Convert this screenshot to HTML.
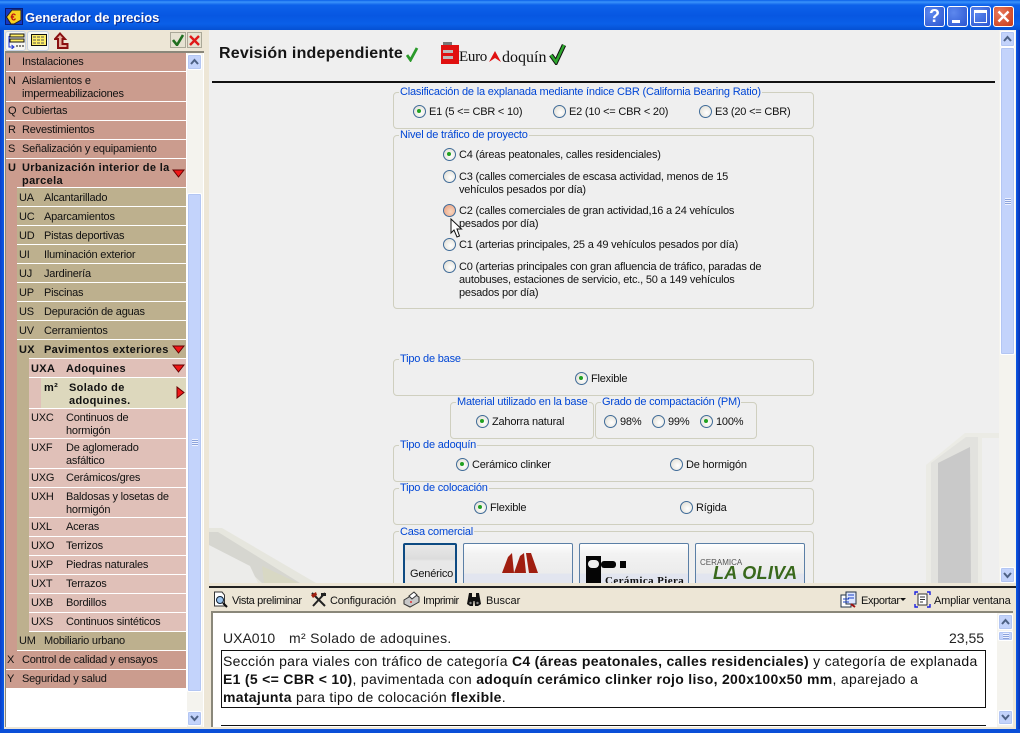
<!DOCTYPE html>
<html><head><meta charset="utf-8">
<style>
html,body{margin:0;padding:0;width:1020px;height:733px;overflow:hidden;background:#efefef}
*{box-sizing:border-box}
body{font-family:"Liberation Sans",sans-serif;font-size:11px;color:#111;position:relative;letter-spacing:-.2px}
div,span,svg{position:absolute}
.t{white-space:nowrap;line-height:13px;margin-top:1px}
.b{font-weight:bold;letter-spacing:.35px}
.r{left:6px;width:180px;background:#cb9c8e;}
.r2{left:17px;width:169px;background:#bdb08e;}
.r3{left:29px;width:157px;background:#e0c0b8;}
.g{position:absolute;border:1px solid #cfcfbf;border-radius:4px}
.l{position:absolute;background:#efefef;color:#0046d5;white-space:nowrap;line-height:13px;padding:0 1px;height:13px;margin-top:1px}
.o{width:13px;height:13px;border-radius:50%;border:1.5px solid #3f6b98;background:radial-gradient(circle at 60% 60%,#fff,#dcd9ce)}
.o.on::after{content:"";position:absolute;left:3px;top:3px;width:4px;height:4px;border-radius:50%;background:#21a121}
.btn{background:#c3d3fb;border:1px solid #fff;border-radius:2px;box-shadow:0 0 0 1px #b3c6f3 inset}
.tbtn{top:6px;width:21px;height:21px;border:1px solid #fff;border-radius:3px;background:radial-gradient(circle at 30% 30%,#5d88ee,#2a55d0)}
.bn{border:1px solid #5b7fa6;border-radius:2px;height:60px;top:543px;background:linear-gradient(#fff 0,#f2f2f2 10px,#ececec 29px,#e2e5ef 30px)}
.d{font-size:14px;letter-spacing:.3px;margin-top:0;color:#111}
</style></head><body>

<!-- window chrome -->
<div style="left:0;top:0;width:1020px;height:733px;background:#0753e0"></div>
<div style="left:0;top:0;width:1020px;height:30px;background:linear-gradient(#0a5fe8 0,#3a93fb 2px,#0d62ea 5px,#0757e2 16px,#0a5fe8 24px,#0550d2 30px)"></div>
<div style="left:0;top:30px;width:4px;height:703px;background:linear-gradient(90deg,#0a3fc8,#0a5ae8)"></div>
<div style="left:1016px;top:30px;width:4px;height:703px;background:linear-gradient(90deg,#0a5ae8,#0a30b0)"></div>
<div style="left:0;top:729px;width:1020px;height:4px;background:#0a4fd8"></div>

<svg style="left:5px;top:8px" width="18" height="17" viewBox="0 0 18 17"><rect width="17" height="16" x=".5" y=".5" fill="#1238c8" stroke="#0a1a70"/><path d="M1.500 9L7 2H16V12L9 16H6Z" fill="#f8d020" stroke="#222"/><text x="5.500" y="12.500" font-size="10" font-weight="bold" fill="#c01010" font-family="Liberation Sans">€</text></svg>
<div class="t" style="left:25px;top:10px;color:#fff;font-weight:bold;font-size:13px;letter-spacing:0;text-shadow:1px 1px 0 #0a2a90">Generador de precios</div>

<div class="tbtn" style="left:924px"><span style="left:4px;top:-1px;color:#fff;font-weight:bold;font-size:18px;line-height:20px;letter-spacing:0">?</span></div>
<div class="tbtn" style="left:947px"><div style="left:4px;top:13px;width:8px;height:3px;background:#fff"></div></div>
<div class="tbtn" style="left:970px"><div style="left:3px;top:3px;width:13px;height:13px;border:1px solid #fff;border-top:3px solid #fff"></div></div>
<div class="tbtn" style="left:993px;background:radial-gradient(circle at 30% 30%,#e8785a,#c83a18)"><svg style="left:3px;top:3px" width="13" height="13"><path d="M1.500 1.500L11.500 11.500M11.500 1.500L1.500 11.500" stroke="#fff" stroke-width="2.400"/></svg></div>

<!-- left panel -->
<div style="left:4px;top:30px;width:205px;height:699px;background:#ede6d6"></div>
<div style="left:5px;top:51px;width:199px;height:676px;background:#fff;border-top:2px solid #8a877a;border-left:1px solid #8a877a"></div>

<!-- toolbar left -->
<div style="left:5px;top:31px;width:21px;height:20px;background:#f7f7f2;border:1px solid #c6d2e2;border-radius:3px"></div>
<div style="left:27px;top:31px;width:22px;height:20px;background:#f7f7f2;border:1px solid #c6d2e2;border-radius:3px"></div>
<svg style="left:7px;top:33px" width="18" height="16"><rect x="3" y="1" width="14" height="3" fill="#ffee66" stroke="#111"/><rect x="3" y="6" width="14" height="3" fill="#ffee66" stroke="#111"/><path d="M2 3V14H6M4.500 12L7 14L4.500 16" stroke="#1a30d0" fill="none"/><path d="M9 13H17" stroke="#111" stroke-dasharray="2 1"/></svg>
<svg style="left:31px;top:34px" width="16" height="13"><rect x=".5" y=".5" width="15" height="11" fill="#ffee66" stroke="#111"/><path d="M2 3H14M2 6H14M2 9H14" stroke="#555" stroke-dasharray="3 1"/></svg>
<svg style="left:54px;top:32px" width="15" height="17"><path d="M6 1.500L11 7H8.500V12H13.500V16H4V7H1Z" fill="#e8b0a0" stroke="#8a1010" stroke-width="2"/></svg>
<div style="left:170px;top:32px;width:16px;height:16px;background:#e6e2d2;border:1px solid #aaa898"></div>
<svg style="left:172px;top:34px" width="13" height="12"><path d="M1 6L5 11L11 1" stroke="#1f6e1f" stroke-width="2.600" fill="none"/></svg>
<div style="left:187px;top:32px;width:15px;height:16px;background:#e6e2d2;border:1px solid #aaa898"></div>
<svg style="left:189px;top:35px" width="12" height="11"><path d="M1 1L10 10M10 1L1 10" stroke="#e01818" stroke-width="2.400"/></svg>

<!-- list -->
<div class="r" style="top:53px;height:18px"></div><span class="t" style="left:8px;top:55px">I</span><span class="t" style="left:22px;top:55px">Instalaciones</span>
<div class="r" style="top:72px;height:29px"></div><span class="t" style="left:8px;top:74px">N</span><span class="t" style="left:22px;top:74px">Aislamientos e</span><span class="t" style="left:22px;top:87px">impermeabilizaciones</span>
<div class="r" style="top:102px;height:18px"></div><span class="t" style="left:8px;top:104px">Q</span><span class="t" style="left:22px;top:104px">Cubiertas</span>
<div class="r" style="top:121px;height:18px"></div><span class="t" style="left:8px;top:123px">R</span><span class="t" style="left:22px;top:123px">Revestimientos</span>
<div class="r" style="top:140px;height:18px"></div><span class="t" style="left:8px;top:142px">S</span><span class="t" style="left:22px;top:142px">Señalización y equipamiento</span>
<div class="r" style="top:159px;height:28px"></div><span class="t b" style="left:8px;top:161px">U</span><span class="t b" style="left:22px;top:161px">Urbanización interior de la</span><span class="t b" style="left:22px;top:174px">parcela</span>
<div class="r" style="top:187px;height:464px;width:11px"></div>

<div class="r2" style="top:188px;height:18px"></div><span class="t" style="left:19px;top:191px">UA</span><span class="t" style="left:44px;top:191px">Alcantarillado</span>
<div class="r2" style="top:207px;height:18px"></div><span class="t" style="left:19px;top:210px">UC</span><span class="t" style="left:44px;top:210px">Aparcamientos</span>
<div class="r2" style="top:226px;height:18px"></div><span class="t" style="left:19px;top:229px">UD</span><span class="t" style="left:44px;top:229px">Pistas deportivas</span>
<div class="r2" style="top:245px;height:18px"></div><span class="t" style="left:19px;top:248px">UI</span><span class="t" style="left:44px;top:248px">Iluminación exterior</span>
<div class="r2" style="top:264px;height:18px"></div><span class="t" style="left:19px;top:267px">UJ</span><span class="t" style="left:44px;top:267px">Jardinería</span>
<div class="r2" style="top:283px;height:18px"></div><span class="t" style="left:19px;top:286px">UP</span><span class="t" style="left:44px;top:286px">Piscinas</span>
<div class="r2" style="top:302px;height:18px"></div><span class="t" style="left:19px;top:305px">US</span><span class="t" style="left:44px;top:305px">Depuración de aguas</span>
<div class="r2" style="top:321px;height:18px"></div><span class="t" style="left:19px;top:324px">UV</span><span class="t" style="left:44px;top:324px">Cerramientos</span>
<div class="r2" style="top:340px;height:18px"></div><span class="t b" style="left:19px;top:343px">UX</span><span class="t b" style="left:44px;top:343px">Pavimentos exteriores</span>
<div class="r2" style="top:358px;height:274px;width:12px"></div>
<div class="r2" style="top:632px;height:18px"></div><span class="t" style="left:19px;top:634px">UM</span><span class="t" style="left:44px;top:634px">Mobiliario urbano</span>

<div class="r3" style="top:359px;height:18px"></div><span class="t b" style="left:31px;top:362px">UXA</span><span class="t b" style="left:66px;top:362px">Adoquines</span>
<div class="r3" style="top:378px;height:30px;width:12px"></div>
<div style="left:41px;top:378px;width:145px;height:30px;background:#ddd8bd"></div><span class="t b" style="left:44px;top:381px">m²</span><span class="t b" style="left:69px;top:381px">Solado de</span><span class="t b" style="left:69px;top:394px">adoquines.</span>
<div class="r3" style="top:409px;height:29px"></div><span class="t" style="left:31px;top:411px">UXC</span><span class="t" style="left:66px;top:411px">Continuos de</span><span class="t" style="left:66px;top:424px">hormigón</span>
<div class="r3" style="top:439px;height:29px"></div><span class="t" style="left:31px;top:441px">UXF</span><span class="t" style="left:66px;top:441px">De aglomerado</span><span class="t" style="left:66px;top:454px">asfáltico</span>
<div class="r3" style="top:469px;height:18px"></div><span class="t" style="left:31px;top:471px">UXG</span><span class="t" style="left:66px;top:471px">Cerámicos/gres</span>
<div class="r3" style="top:488px;height:29px"></div><span class="t" style="left:31px;top:490px">UXH</span><span class="t" style="left:66px;top:490px">Baldosas y losetas de</span><span class="t" style="left:66px;top:503px">hormigón</span>
<div class="r3" style="top:518px;height:18px"></div><span class="t" style="left:31px;top:520px">UXL</span><span class="t" style="left:66px;top:520px">Aceras</span>
<div class="r3" style="top:537px;height:18px"></div><span class="t" style="left:31px;top:539px">UXO</span><span class="t" style="left:66px;top:539px">Terrizos</span>
<div class="r3" style="top:556px;height:18px"></div><span class="t" style="left:31px;top:558px">UXP</span><span class="t" style="left:66px;top:558px">Piedras naturales</span>
<div class="r3" style="top:575px;height:18px"></div><span class="t" style="left:31px;top:577px">UXT</span><span class="t" style="left:66px;top:577px">Terrazos</span>
<div class="r3" style="top:594px;height:18px"></div><span class="t" style="left:31px;top:596px">UXB</span><span class="t" style="left:66px;top:596px">Bordillos</span>
<div class="r3" style="top:613px;height:18px"></div><span class="t" style="left:31px;top:615px">UXS</span><span class="t" style="left:66px;top:615px">Continuos sintéticos</span>

<div class="r" style="top:651px;height:18px"></div><span class="t" style="left:7px;top:653px">X</span><span class="t" style="left:22px;top:653px">Control de calidad y ensayos</span>
<div class="r" style="top:670px;height:18px"></div><span class="t" style="left:7px;top:672px">Y</span><span class="t" style="left:22px;top:672px">Seguridad y salud</span>

<svg style="left:172px;top:169px" width="13" height="9"><path d="M1 1H12L6.500 8Z" fill="#f01818" stroke="#600" stroke-width="1"/></svg>
<svg style="left:172px;top:345px" width="13" height="9"><path d="M1 1H12L6.500 8Z" fill="#f01818" stroke="#600" stroke-width="1"/></svg>
<svg style="left:172px;top:364px" width="13" height="9"><path d="M1 1H12L6.500 8Z" fill="#f01818" stroke="#600" stroke-width="1"/></svg>
<svg style="left:176px;top:386px" width="9" height="13"><path d="M1 1V12L8 6.500Z" fill="#f01818" stroke="#600" stroke-width="1"/></svg>

<!-- left scrollbar -->
<div style="left:187px;top:53px;width:16px;height:674px;background:#f4f3ee"></div>
<div class="btn" style="left:187px;top:54px;width:15px;height:16px"></div>
<svg style="left:190px;top:58px" width="9" height="7"><path d="M1 6L4.500 2L8 6" stroke="#4d6185" stroke-width="2" fill="none"/></svg>
<div class="btn" style="left:187px;top:193px;width:15px;height:499px"></div>
<div style="left:192px;top:439px;width:6px;height:7px;background:repeating-linear-gradient(#eef2ff 0,#eef2ff 1px,#8ca3db 1px,#8ca3db 2px)"></div>
<div class="btn" style="left:187px;top:711px;width:15px;height:15px"></div>
<svg style="left:190px;top:715px" width="9" height="7"><path d="M1 1L4.500 5L8 1" stroke="#4d6185" stroke-width="2" fill="none"/></svg>

<!-- splitter -->
<div style="left:205px;top:30px;width:4px;height:699px;background:#ede6d6"></div>

<!-- main -->
<div id="main" style="left:209px;top:30px;width:790px;height:553px;background:#efefef;overflow:hidden">
  <svg style="left:0;top:0" width="790" height="553" viewBox="209 30 790 553">
    <path d="M209 528H222L316 583H255L209 562Z" fill="#e6e6de"/>
    <path d="M209 532H218L300 583H262L250 572L209 556Z" fill="#d6d6d0"/>
    <path d="M209 545L250 566L258 583H209Z" fill="#ececea"/>
    <path d="M262 566L298 583H264Z" fill="#d8d8c4"/>
    <path d="M926 583V465L965 433H999V438H982V583Z" fill="#ebebe5"/>
    <path d="M931 583V463L966 437H978V583Z" fill="#e2e2de"/>
    <path d="M938 583V463L970 447L971 583Z" fill="#c9c9c9"/>
  </svg>
</div>
<div style="left:212px;top:81px;width:783px;height:2px;background:#111"></div>

<span class="t" style="left:219px;top:44px;margin-top:0;font-weight:bold;font-size:16px;line-height:19px;letter-spacing:.2px;color:#151515">Revisión independiente</span>
<svg style="left:406px;top:46px" width="13" height="16"><path d="M1 9L4.500 14L11 2" stroke="#2a9a2a" stroke-width="2.800" fill="none"/></svg>
<div style="left:441px;top:45px;width:18px;height:19px;background:#e01010"></div>
<div style="left:443px;top:42px;width:9px;height:3px;background:#777"></div>
<div style="left:443px;top:50px;width:10px;height:3px;background:#bbb"></div>
<div style="left:443px;top:56px;width:10px;height:3px;background:#bbb"></div>
<span class="t" style="left:459px;top:49px;margin-top:0;font-family:'Liberation Serif',serif;font-size:15px;line-height:17px;color:#111;letter-spacing:-.3px">Euro</span>
<svg style="left:488px;top:50px" width="14" height="13"><path d="M1 12L7 1L13 12L7 8Z" fill="#e01010"/></svg>
<span class="t" style="left:502px;top:49px;margin-top:0;font-family:'Liberation Serif',serif;font-size:16px;line-height:17px;color:#111;letter-spacing:0">doquín</span>
<svg style="left:549px;top:42px" width="18" height="23"><path d="M2 13L7 20L15 3" stroke="#111" stroke-width="4.500" fill="none"/><path d="M2 13L7 20L15 3" stroke="#2ea82e" stroke-width="2.500" fill="none"/></svg>

<!-- group 1 -->
<div class="g" style="left:393px;top:92px;width:421px;height:37px"></div>
<span class="l" style="left:399px;top:85px">Clasificación de la explanada mediante índice CBR (California Bearing Ratio)</span>
<div class="o on" style="left:413px;top:105px"></div><span class="t" style="left:429px;top:105px">E1 (5 &lt;= CBR &lt; 10)</span>
<div class="o" style="left:553px;top:105px"></div><span class="t" style="left:569px;top:105px">E2 (10 &lt;= CBR &lt; 20)</span>
<div class="o" style="left:699px;top:105px"></div><span class="t" style="left:715px;top:105px">E3 (20 &lt;= CBR)</span>

<!-- group 2 -->
<div class="g" style="left:393px;top:135px;width:421px;height:174px"></div>
<span class="l" style="left:399px;top:128px">Nivel de tráfico de proyecto</span>
<div class="o on" style="left:443px;top:148px"></div><span class="t" style="left:459px;top:148px">C4 (áreas peatonales, calles residenciales)</span>
<div class="o" style="left:443px;top:170px"></div><span class="t" style="left:459px;top:170px">C3 (calles comerciales de escasa actividad, menos de 15</span><span class="t" style="left:459px;top:183px">vehículos pesados por día)</span>
<div class="o" style="left:443px;top:204px;background:radial-gradient(circle at 60% 60%,#f8d8c0,#e89878)"></div><span class="t" style="left:459px;top:204px">C2 (calles comerciales de gran actividad,16 a 24 vehículos</span><span class="t" style="left:459px;top:217px">pesados por día)</span>
<div class="o" style="left:443px;top:238px"></div><span class="t" style="left:459px;top:238px">C1 (arterias principales, 25 a 49 vehículos pesados por día)</span>
<div class="o" style="left:443px;top:260px"></div><span class="t" style="left:459px;top:260px">C0 (arterias principales con gran afluencia de tráfico, paradas de</span><span class="t" style="left:459px;top:273px">autobuses, estaciones de servicio, etc., 50 a 149 vehículos</span><span class="t" style="left:459px;top:286px">pesados por día)</span>
<svg style="left:450px;top:218px" width="13" height="21"><path d="M1 1V15L4 12L7 19L9.500 18L7 11H11.500Z" fill="#fff" stroke="#111"/></svg>

<!-- group 3 -->
<div class="g" style="left:393px;top:359px;width:421px;height:37px"></div>
<span class="l" style="left:399px;top:352px">Tipo de base</span>
<div class="o on" style="left:575px;top:372px"></div><span class="t" style="left:591px;top:372px">Flexible</span>

<div class="g" style="left:450px;top:402px;width:144px;height:37px"></div>
<span class="l" style="left:456px;top:395px">Material utilizado en la base</span>
<div class="o on" style="left:476px;top:415px"></div><span class="t" style="left:492px;top:415px">Zahorra natural</span>

<div class="g" style="left:595px;top:402px;width:162px;height:37px"></div>
<span class="l" style="left:601px;top:395px">Grado de compactación (PM)</span>
<div class="o" style="left:604px;top:415px"></div><span class="t" style="left:620px;top:415px">98%</span>
<div class="o" style="left:652px;top:415px"></div><span class="t" style="left:668px;top:415px">99%</span>
<div class="o on" style="left:700px;top:415px"></div><span class="t" style="left:716px;top:415px">100%</span>

<div class="g" style="left:393px;top:445px;width:421px;height:37px"></div>
<span class="l" style="left:399px;top:438px">Tipo de adoquín</span>
<div class="o on" style="left:456px;top:458px"></div><span class="t" style="left:472px;top:458px">Cerámico clinker</span>
<div class="o" style="left:670px;top:458px"></div><span class="t" style="left:686px;top:458px">De hormigón</span>

<div class="g" style="left:393px;top:488px;width:421px;height:37px"></div>
<span class="l" style="left:399px;top:481px">Tipo de colocación</span>
<div class="o on" style="left:474px;top:501px"></div><span class="t" style="left:490px;top:501px">Flexible</span>
<div class="o" style="left:680px;top:501px"></div><span class="t" style="left:696px;top:501px">Rígida</span>

<div class="g" style="left:393px;top:531px;width:421px;height:80px"></div>
<span class="l" style="left:399px;top:525px">Casa comercial</span>

<div style="left:403px;top:543px;width:54px;height:60px;border:2px solid #0d4a82;border-radius:2px;background:linear-gradient(#e8e8e8 0,#dcdcdc 14px,#e8e8e8 16px)"></div>
<span class="t" style="left:410px;top:567px">Genérico</span>
<div class="bn" style="left:463px;width:110px"></div>
<svg style="left:502px;top:553px" width="37" height="21"><path d="M0 20L6 4L10 0L12 20H7ZM12 20L18 3L22 0L24 20H18ZM24 0H29L36 20H27Z" fill="#a01e10"/></svg>
<div class="bn" style="left:579px;width:110px"></div>
<div style="left:586px;top:556px;width:15px;height:40px;background:#050505"></div>
<div style="left:601px;top:561px;width:15px;height:7px;background:#050505;border-radius:3px"></div>
<div style="left:620px;top:561px;width:6px;height:7px;background:#050505"></div>
<div style="left:588px;top:560px;width:11px;height:8px;background:#eee;border-radius:4px"></div>
<span class="t" style="left:605px;top:574px;font-weight:bold;font-family:'Liberation Serif',serif;font-size:11px;letter-spacing:.4px;color:#111">Cerámica Piera</span>
<div class="bn" style="left:695px;width:110px"></div>
<span class="t" style="left:700px;top:555px;font-size:8px;letter-spacing:0;color:#555">CERAMICA</span>
<span class="t" style="left:713px;top:563px;font-weight:bold;font-size:18px;line-height:19px;font-style:italic;color:#38681c;letter-spacing:.3px">LA OLIVA</span>

<!-- right scrollbar -->
<div style="left:999px;top:30px;width:17px;height:553px;background:#f4f3ee"></div>
<div class="btn" style="left:1000px;top:31px;width:15px;height:16px"></div>
<svg style="left:1003px;top:35px" width="9" height="7"><path d="M1 6L4.500 2L8 6" stroke="#4d6185" stroke-width="2" fill="none"/></svg>
<div class="btn" style="left:1000px;top:47px;width:15px;height:308px"></div>
<div style="left:1005px;top:198px;width:6px;height:7px;background:repeating-linear-gradient(#eef2ff 0,#eef2ff 1px,#8ca3db 1px,#8ca3db 2px)"></div>
<div class="btn" style="left:1000px;top:567px;width:15px;height:16px"></div>
<svg style="left:1003px;top:572px" width="9" height="7"><path d="M1 1L4.500 5L8 1" stroke="#4d6185" stroke-width="2" fill="none"/></svg>

<!-- divider and bottom panel -->
<div style="left:209px;top:583px;width:807px;height:146px;background:#ede6d6"></div>
<div style="left:209px;top:586px;width:807px;height:2px;background:#222"></div>
<div style="left:211px;top:611px;width:802px;height:116px;background:#fff;border-top:2px solid #8a877a;border-left:2px solid #8a877a"></div>

<svg style="left:212px;top:591px" width="17" height="17"><path d="M2.500 1H10L12.500 4V15H2.500Z" fill="#fff" stroke="#333"/><circle cx="8" cy="9" r="3.500" fill="#9cc4ee" stroke="#123"/><path d="M11 12L15 16" stroke="#111" stroke-width="2"/></svg>
<span class="t" style="left:232px;top:594px;letter-spacing:-.37px">Vista preliminar</span>
<svg style="left:310px;top:591px" width="17" height="17"><path d="M2 2L15 15M15 2L3 15" stroke="#222" stroke-width="2"/><path d="M1 4L6 1L7 4L3 7Z" fill="#a02010"/><path d="M11 2H16V5H11Z" fill="#222"/></svg>
<span class="t" style="left:330px;top:594px;letter-spacing:-.15px">Configuración</span>
<svg style="left:403px;top:591px" width="17" height="17"><path d="M1 9L11 3L16 6V11L7 16L1 13Z" fill="#c8c8c8" stroke="#333"/><path d="M6 5L11 1L14 4L9 8Z" fill="#fff" stroke="#333"/><circle cx="8" cy="11" r="1" fill="#d33"/></svg>
<span class="t" style="left:423px;top:594px;letter-spacing:-.5px">Imprimir</span>
<svg style="left:466px;top:592px" width="16" height="15"><path d="M3 1H6V5H10V1H13L15 12L12 14H9L8.500 9H7.500L7 14H4L1 12Z" fill="#111"/><circle cx="4.500" cy="11" r="1.200" fill="#888"/><circle cx="11.500" cy="11" r="1.200" fill="#888"/></svg>
<span class="t" style="left:486px;top:594px;letter-spacing:0">Buscar</span>
<svg style="left:840px;top:591px" width="17" height="17"><rect x="1" y="4" width="10" height="12" fill="#fff" stroke="#234"/><rect x="6" y="1" width="10" height="12" fill="#dde6ff" stroke="#234"/><path d="M3 8H9M3 11H9M8 4H14M8 7H14" stroke="#1a40c0"/><path d="M11 13L15 16" stroke="#a01010" stroke-width="2"/></svg>
<span class="t" style="left:861px;top:594px;letter-spacing:-.37px">Exportar</span>
<svg style="left:900px;top:598px" width="6" height="4"><path d="M0 0H6L3 3Z" fill="#111"/></svg>
<svg style="left:914px;top:591px" width="17" height="17"><path d="M4 3H13V14H4Z" fill="#fff" stroke="#333"/><path d="M6 6H11M6 8.500H11M6 11H9" stroke="#333"/><path d="M1 4V1H4M13 1H16V4M16 13V16H13M4 16H1V13" stroke="#1a20e0" fill="none" stroke-width="1.400"/></svg>
<span class="t" style="left:934px;top:594px">Ampliar ventana</span>

<!-- document -->
<span class="t d" style="left:223px;top:631px;line-height:15px;letter-spacing:0;color:#222">UXA010</span>
<span class="t d" style="left:289px;top:631px;line-height:15px;color:#222">m² Solado de adoquines.</span>
<span class="t d" style="left:949px;top:631px;line-height:15px;letter-spacing:0;color:#222">23,55</span>
<div style="left:221px;top:650px;width:765px;height:58px;border:1px solid #111"></div>
<span class="t d" style="left:223px;top:652px;line-height:18px;height:18px">Sección para viales con tráfico de categoría <b>C4 (áreas peatonales, calles residenciales)</b> y categoría de explanada</span>
<span class="t d" style="left:223px;top:670px;line-height:18px;height:18px"><b>E1 (5 &lt;= CBR &lt; 10)</b>, pavimentada con <b>adoquín cerámico clinker rojo liso, 200x100x50 mm</b>, aparejado a</span>
<span class="t d" style="left:223px;top:688px;line-height:18px;height:18px"><b>matajunta</b> para tipo de colocación <b>flexible</b>.</span>
<div style="left:221px;top:725px;width:765px;height:1px;background:#111"></div>

<div style="left:997px;top:613px;width:16px;height:114px;background:#f4f3ee"></div>
<div class="btn" style="left:998px;top:614px;width:15px;height:16px"></div>
<svg style="left:1001px;top:618px" width="9" height="7"><path d="M1 6L4.500 2L8 6" stroke="#4d6185" stroke-width="2" fill="none"/></svg>
<div class="btn" style="left:998px;top:631px;width:15px;height:10px"></div>
<div style="left:1003px;top:633px;width:6px;height:6px;background:repeating-linear-gradient(#eef2ff 0,#eef2ff 1px,#8ca3db 1px,#8ca3db 2px)"></div>
<div class="btn" style="left:998px;top:710px;width:15px;height:15px"></div>
<svg style="left:1001px;top:714px" width="9" height="7"><path d="M1 1L4.500 5L8 1" stroke="#4d6185" stroke-width="2" fill="none"/></svg>

</body></html>
